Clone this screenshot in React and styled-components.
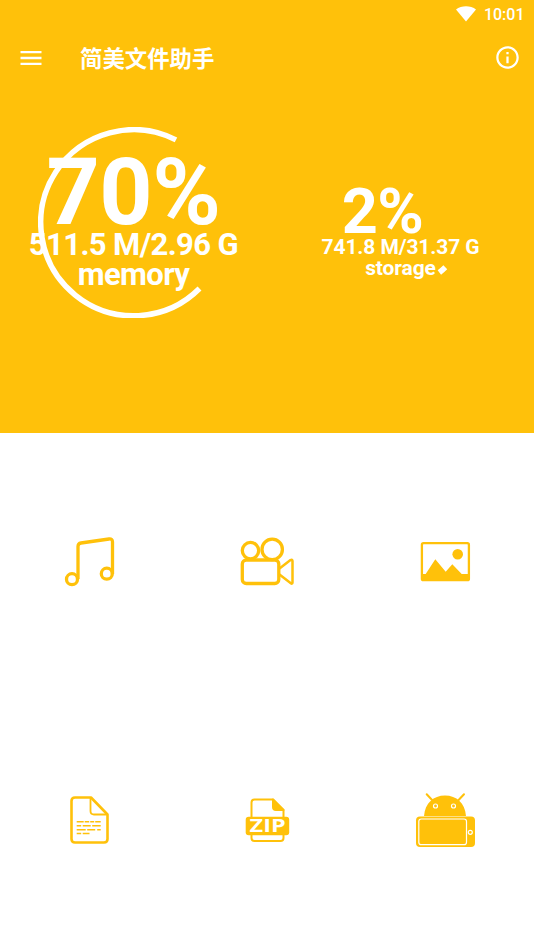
import styled, { createGlobalStyle } from "styled-components";

const GlobalStyle = createGlobalStyle`
  :root {
    --color-brand: #ffc10a;
    --color-light: #ffffff;
  }

  * {
    box-sizing: border-box;
  }

  body {
    margin: 0;
    background-color: var(--color-light);
    font-family: Roboto, "Noto Sans CJK SC", sans-serif;
  }
`;

const Page = styled.div`
  display: flex;
  flex-direction: column;
  width: 534px;
  height: 949px;
  overflow: hidden;
`;

const Header = styled.header`
  height: 433px;
  background-color: var(--color-brand);
  color: var(--color-light);
`;

const StatusBar = styled.div`
  display: flex;
  justify-content: flex-end;
  align-items: center;
  gap: 8px;
  height: 27px;
  padding-right: 9.5px;
`;

const Clock = styled.span`
  font-size: 16px;
  font-weight: 500;
  line-height: 28px;
  padding-top: 2px;
`;

const Toolbar = styled.div`
  display: flex;
  align-items: center;
  height: 61px;
  padding: 0 13.5px 0 17px;
`;

const Title = styled.h1`
  flex: 1;
  margin: 0 0 0 35px;
  padding-bottom: 2px;
  font-family: "Noto Sans CJK SC", sans-serif;
  font-size: 22.4px;
  font-weight: 700;
  line-height: 30px;
`;

const Gauges = styled.div`
  display: grid;
  grid-template-columns: 1fr 1fr;
  height: 269px;
`;

// ring and text share the same grid cell
const GaugeBox = styled.div`
  display: grid;
  place-items: center;

  & > * {
    grid-area: 1 / 1;
  }
`;

const GaugeText = styled.div`
  display: flex;
  flex-direction: column;
  align-items: center;
  padding-top: ${({ $big }) => ($big ? "0" : "20px")};
  font-weight: 700;
  white-space: nowrap;
`;

const Percent = styled.div`
  padding-right: ${({ $big }) => ($big ? "0" : "36px")};
  font-size: ${({ $big }) => ($big ? "93px" : "63px")};
  letter-spacing: -0.5px;
  line-height: ${({ $big }) => ($big ? "75px" : "50px")};
`;

const Detail = styled.div`
  font-size: ${({ $big }) => ($big ? "31px" : "21px")};
  letter-spacing: ${({ $big }) => ($big ? "-0.6px" : "-0.1px")};
  line-height: ${({ $big }) => ($big ? "30.5px" : "21px")};
`;

const Categories = styled.main`
  flex: 1;
  display: grid;
  grid-template-columns: repeat(3, 1fr);
  grid-template-rows: 258px 258px;
`;

const Category = styled.div`
  display: grid;
  place-items: center;
`;

const Icon = styled.svg`
  width: 60px;
  height: 60px;
  overflow: visible;
  fill: none;
  stroke: var(--color-brand);
  stroke-width: ${({ $stroke }) => $stroke || 3.3};
  stroke-linejoin: round;
`;

const ZipLabel = styled.text`
  fill: var(--color-light);
  stroke: none;
  font-family: "Open Sans", sans-serif;
  font-size: 18px;
  font-weight: 700;
`;

// the arc starts at 45 degrees and runs clockwise
function Ring({ radius, stroke, percent }) {
  const size = 2 * radius + stroke;
  const c = size / 2;
  const point = (deg) => {
    const a = (deg * Math.PI) / 180;
    return `${c + radius * Math.cos(a)} ${c + radius * Math.sin(a)}`;
  };
  const sweep = percent * 3.6;

  return (
    <svg width={size} height={size}>
      <path
        d={`M${point(45)} A${radius} ${radius} 0 ${sweep > 180 ? 1 : 0} 1 ${point(45 + sweep)}`}
        fill="none"
        stroke="currentColor"
        strokeWidth={stroke}
      />
    </svg>
  );
}

function Gauge({ big, radius, stroke, percent, usage, label }) {
  return (
    <GaugeBox>
      <Ring radius={radius} stroke={stroke} percent={percent} />
      <GaugeText $big={big}>
        <Percent $big={big}>{percent}%</Percent>
        <Detail $big={big}>{usage}</Detail>
        <Detail $big={big}>{label}</Detail>
      </GaugeText>
    </GaugeBox>
  );
}

function MusicIcon() {
  return (
    <Icon viewBox="0 0 60 60">
      <circle cx="13" cy="47.2" r="5.5" />
      <circle cx="47.8" cy="41.7" r="5.5" />
      <path d="M19 47V14.5q0-3 3-3.5L50 7q3.5-.5 3.5 3V42" />
    </Icon>
  );
}

function VideoIcon() {
  return (
    <Icon viewBox="0 0 60 60">
      <circle cx="13.5" cy="18.6" r="8.2" />
      <circle cx="35.2" cy="17.4" r="10.2" />
      <rect x="5.3" y="28" width="36.5" height="23.5" rx="4" />
      <path d="M42.5 36.5L53.5 28Q55.5 27 55.5 29V50.5Q55.5 52.5 53.5 51L42.5 42.5" strokeWidth="2.5" />
    </Icon>
  );
}

function ImageIcon() {
  return (
    <Icon viewBox="0 0 60 60" $stroke={2.3}>
      <rect x="6.9" y="11.2" width="47" height="37" rx="1.5" />
      <g fill="var(--color-brand)" stroke="none">
        <circle cx="42.7" cy="22.2" r="5.3" />
        <path d="M6 42h4.7L20.3 27.3 30.7 39.7 37.3 32.3 46.7 42H55v6H6z" />
      </g>
    </Icon>
  );
}

function DocumentIcon() {
  return (
    <Icon viewBox="0 0 60 60" $stroke={2.6}>
      <path d="M16 7.5H32L48.500 24.500V49q0 3.500-3.500 3.500H16q-3.500 0-3.500-3.500V11q0-3.500 3.500-3.500z" />
      <path d="M31.5 8V21q0 3.500 3.500 3.500H48" strokeWidth="1.8" />
      <g strokeWidth="1.5">
        <path d="M17.7 31.7H41.7" strokeDasharray="7 1 4.5 1 4 1 6" />
        <path d="M17.7 35.7H41.7" strokeDasharray="4.5 1.5 8 1.5 9" />
        <path d="M17.7 39.7H41.7" strokeDasharray="9 1.5 8 2 4" />
        <path d="M17.7 43.6H30.5" strokeDasharray="4.5 1.5 7" />
      </g>
    </Icon>
  );
}

function ZipIcon() {
  return (
    <Icon viewBox="0 0 60 60" $stroke={2}>
      <path d="M36 9.5H17.5q-3 0-3 3V48q0 3 3 3H43.5q3 0 3-3V20z" />
      <path d="M36 9.5V17q0 3 3 3h7.5z" fill="var(--color-brand)" />
      <rect x="8.7" y="26.7" width="43.5" height="18.6" rx="3" fill="var(--color-brand)" stroke="none" />
      <ZipLabel x="12.6" y="42.3" textLength="36" lengthAdjust="spacingAndGlyphs">ZIP</ZipLabel>
    </Icon>
  );
}

function AndroidIcon() {
  return (
    <Icon viewBox="0 0 60 60" $stroke={2}>
      <path d="M11.7 4.3L18 11M49 4.3L42.7 11" strokeLinecap="round" />
      <path d="M9 26C10 13 18.5 5.5 30 5.5S50 13 51 26z" fill="var(--color-brand)" stroke="none" />
      <rect x="1" y="26.5" width="59" height="30.5" rx="4" fill="var(--color-brand)" stroke="none" />
      <g stroke="var(--color-light)" strokeWidth="1.2">
        <circle cx="20.5" cy="16" r="2" />
        <circle cx="38.5" cy="16" r="2" />
        <rect x="3.8" y="29" width="47.7" height="25.7" rx="2.5" />
        <circle cx="55.3" cy="42.3" r="2" />
      </g>
    </Icon>
  );
}

const categories = [MusicIcon, VideoIcon, ImageIcon, DocumentIcon, ZipIcon, AndroidIcon];

function App() {
  return (
    <>
      <GlobalStyle />
      <Page>
        <Header>
          <StatusBar>
            <svg width="20" height="16" viewBox="0 0 20 16" fill="currentColor">
              <path d="M10 15.5L0 3.5C5.5-.8 14.5-.8 20 3.5z" />
            </svg>
            <Clock>10:01</Clock>
          </StatusBar>
          <Toolbar>
            <svg width="28" height="28" viewBox="0 0 24 24" fill="currentColor">
              <path d="M3 18h18v-2H3v2zm0-5h18v-2H3v2zm0-7v2h18V6H3z" />
            </svg>
            <Title>简美文件助手</Title>
            <svg width="27" height="27" viewBox="0 0 24 24" fill="currentColor">
              <path d="M11 17h2v-6h-2v6zm1-15C6.48 2 2 6.48 2 12s4.48 10 10 10 10-4.48 10-10S17.52 2 12 2zm0 18c-4.41 0-8-3.59-8-8s3.59-8 8-8 8 3.59 8 8-3.59 8-8 8zM11 9h2V7h-2v2z" />
            </svg>
          </Toolbar>
          <Gauges>
            <Gauge big radius={93} stroke={5.5} percent={70} usage="511.5 M/2.96 G" label="memory" />
            <Gauge radius={63} stroke={5.5} percent={2} usage="741.8 M/31.37 G" label="storage" />
          </Gauges>
        </Header>
        <Categories>
          {categories.map((CategoryIcon, i) => (
            <Category key={i}>
              <CategoryIcon />
            </Category>
          ))}
        </Categories>
      </Page>
    </>
  );
}

export default App;
